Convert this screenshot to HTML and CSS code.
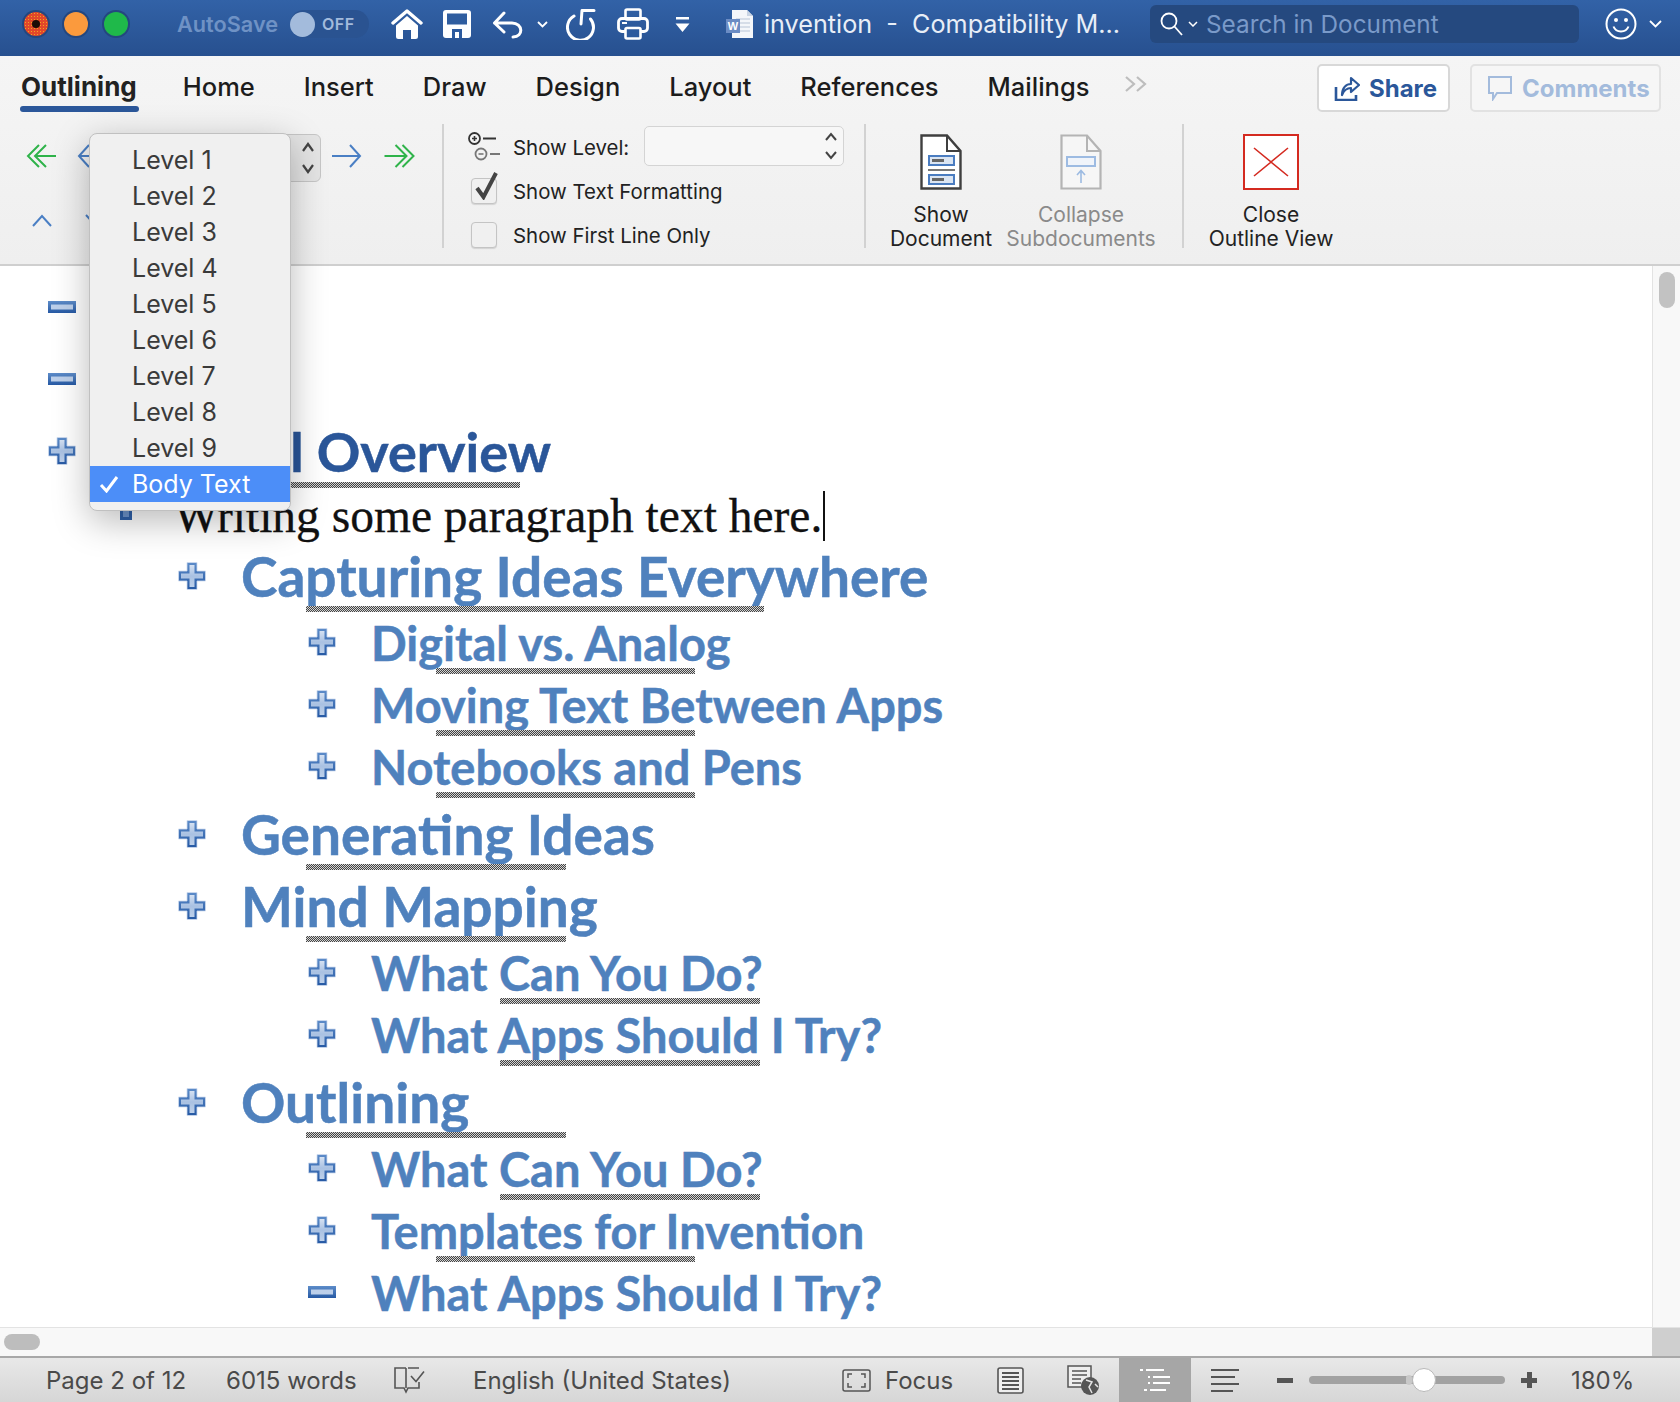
FILE: index.html
```html
<!DOCTYPE html>
<html lang="en">
<head>
<meta charset="utf-8">
<title>invention - Compatibility Mode</title>
<link rel="stylesheet" href="styles.css">
</head>
<body>
<svg class="defs" width="0" height="0" aria-hidden="true">
  <defs>
    <linearGradient id="pg" x1="0" y1="0" x2="0" y2="1">
      <stop offset="0" stop-color="#d5e1f2"/><stop offset="0.5" stop-color="#a9c1e2"/><stop offset="1" stop-color="#bdd0ea"/>
    </linearGradient>
    <linearGradient id="po" x1="0" y1="0" x2="0" y2="1">
      <stop offset="0" stop-color="#5d8cc9"/><stop offset="1" stop-color="#2659a4"/>
    </linearGradient>
    <symbol id="plus" viewBox="0 0 28 28">
      <path d="M9 0.500H19V9H27.500V19H19V27.500H9V19H0.500V9H9Z" fill="url(#po)" stroke="#cfdcef" stroke-width="0.800"/>
      <path d="M11.500 3H16.500V11.500H25V16.500H16.500V25H11.500V16.500H3V11.500H11.500Z" fill="url(#pg)"/>
    </symbol>
    <symbol id="minus" viewBox="0 0 28 12">
      <rect x="0" y="0" width="28" height="12" fill="url(#po)"/>
      <rect x="3" y="3.500" width="22" height="5" fill="#bccfea"/>
    </symbol>
    <symbol id="doc-show" viewBox="0 0 42 56">
      <path d="M1.500 1.500H27L40.500 17V54.500H1.500Z" fill="#fff" stroke="#3f3f3f" stroke-width="2.400"/>
      <path d="M27 1.500V17H40.500" fill="none" stroke="#3f3f3f" stroke-width="2"/>
      <rect x="9" y="22" width="25" height="9" fill="#dbe5f2" stroke="#4a7cc0" stroke-width="2"/>
      <rect x="12" y="25" width="12" height="3" fill="#666"/>
      <rect x="8" y="35" width="27" height="2" fill="#777"/>
      <rect x="9" y="41" width="25" height="9" fill="#dbe5f2" stroke="#4a7cc0" stroke-width="2"/>
      <rect x="12" y="44" width="12" height="3" fill="#666"/>
    </symbol>
    <symbol id="doc-collapse" viewBox="0 0 42 56">
      <path d="M1.500 1.500H27L40.500 17V54.500H1.500Z" fill="#f6f6f6" stroke="#b4b4b4" stroke-width="2.200"/>
      <path d="M27 1.500V17H40.500" fill="none" stroke="#b4b4b4" stroke-width="2"/>
      <rect x="7" y="23" width="28" height="9" fill="#f0f4fa" stroke="#9dbbe2" stroke-width="2"/>
      <path d="M21 49V37M17 41L21 36.500L25 41" fill="none" stroke="#9dbbe2" stroke-width="1.600"/>
    </symbol>
  </defs>
</svg>

<div class="page">
  <header class="titlebar">
    <span class="light light-red"><span class="light-dot"></span></span>
    <span class="light light-yellow"></span>
    <span class="light light-green"></span>
    <span class="autosave">AutoSave</span>
    <span class="toggle"><span class="knob"></span><span class="toggle-text">OFF</span></span>
    <svg class="qa qa-home" width="32" height="30" viewBox="0 0 32 30"><path d="M2 14L16 2L30 14" fill="none" stroke="#fff" stroke-width="3.400" stroke-linecap="round" stroke-linejoin="round"/><path d="M5 16.500L16 7L27 16.500V27.500A2.500 2.500 0 0 1 24.500 30H20V21H12V30H7.500A2.500 2.500 0 0 1 5 27.500Z" fill="#fff"/></svg>
    <svg class="qa qa-save" width="28" height="28" viewBox="0 0 28 28"><rect x="0" y="0" width="28" height="28" rx="3" fill="#fff"/><rect x="4" y="3.500" width="20" height="11" fill="#2f5d9f"/><rect x="9" y="19" width="10" height="9" fill="#2c5a9e"/><rect x="12" y="22" width="4" height="6" fill="#fff"/></svg>
    <svg class="qa qa-undo" width="32" height="30" viewBox="0 0 32 30"><path d="M12 4L2.500 14L12 23M2.500 14H20C31 14 32 28 21 28" fill="none" stroke="#fff" stroke-width="3" stroke-linecap="round" stroke-linejoin="round"/></svg>
    <svg class="qa qa-chev" width="11" height="7" viewBox="0 0 11 7"><path d="M1 1L5.500 5.500L10 1" fill="none" stroke="#fff" stroke-width="1.800"/></svg>
    <svg class="qa qa-redo" width="30" height="32" viewBox="0 0 30 32"><path d="M8 8A13 13 0 1 0 24.500 11M28 2.500H16L15 16" fill="none" stroke="#fff" stroke-width="3" stroke-linecap="round" stroke-linejoin="round"/></svg>
    <svg class="qa qa-print" width="32" height="32" viewBox="0 0 32 32"><rect x="8.500" y="1.500" width="15" height="10" rx="1.500" fill="none" stroke="#fff" stroke-width="2.600"/><rect x="1.500" y="10.500" width="29" height="13" rx="3.500" fill="none" stroke="#fff" stroke-width="2.800"/><path d="M5 15H10" stroke="#fff" stroke-width="2"/><rect x="8.500" y="20" width="15" height="10.500" rx="1.500" fill="#2c5a9e" stroke="#fff" stroke-width="2.600"/></svg>
    <svg class="qa qa-more" width="15" height="15" viewBox="0 0 15 15"><rect x="1" y="0" width="13" height="2.500" fill="#fff"/><path d="M0.500 6.500H14.500L7.500 15Z" fill="#fff"/></svg>
    <svg class="qa qa-word" width="28" height="28" viewBox="0 0 28 28"><path d="M6 0H21L27 6V28H6Z" fill="#f4f6fa"/><path d="M21 0V6H27" fill="#c9d4e4"/><path d="M10 9H24M10 13H24M10 17H24M10 21H24" stroke="#b8c4d6" stroke-width="1.200"/><rect x="0" y="9" width="14" height="14" fill="#6b8cc4"/><text class="word-w" x="7" y="20">W</text></svg>
    <span class="doc-title">invention&nbsp; - &nbsp;Compatibility M...</span>
    <div class="search">
      <svg class="search-icon" width="24" height="24" viewBox="0 0 24 24"><circle cx="9" cy="9" r="7.500" fill="none" stroke="#fff" stroke-width="1.800"/><path d="M14.500 14.500L22 23" stroke="#fff" stroke-width="1.800"/></svg>
      <svg class="search-chev" width="10" height="6" viewBox="0 0 10 6"><path d="M1 1L5 5L9 1" fill="none" stroke="#fff" stroke-width="1.500"/></svg>
      <span class="search-text">Search in Document</span>
    </div>
    <svg class="qa qa-smile" width="32" height="32" viewBox="0 0 32 32"><circle cx="16" cy="16" r="14.500" fill="none" stroke="#fff" stroke-width="2"/><circle cx="11" cy="12" r="2" fill="#fff"/><circle cx="21" cy="12" r="2" fill="#fff"/><path d="M8.500 18.500C11 25 21 25 23.500 18.500" fill="none" stroke="#fff" stroke-width="2"/></svg>
    <svg class="qa qa-chev2" width="13" height="8" viewBox="0 0 13 8"><path d="M1 1L6.500 6.500L12 1" fill="none" stroke="#fff" stroke-width="1.800"/></svg>
  </header>

  <section class="ribbon">
    <div class="tabrow">
      <nav class="tabs">
        <span class="tab tab-active">Outlining</span>
        <span class="tab">Home</span>
        <span class="tab">Insert</span>
        <span class="tab">Draw</span>
        <span class="tab">Design</span>
        <span class="tab">Layout</span>
        <span class="tab">References</span>
        <span class="tab">Mailings</span>
        <svg class="tab-more" width="24" height="16" viewBox="0 0 24 16"><path d="M2 1L10 8L2 15M13 1L21 8L13 15" fill="none" stroke="#bdbdbd" stroke-width="2.200"/></svg>
      </nav>
      <div class="tab-actions">
        <button class="btn btn-share">
          <svg width="26" height="26" viewBox="0 0 26 26"><path d="M2 12V25H22V20" fill="none" stroke="#2b579a" stroke-width="2.600"/><path d="M8 20C8 13 12 9 17 9V3L25 10L17 17V13C13 13 10 15 8 20Z" fill="#fff" stroke="#2b579a" stroke-width="2.200" stroke-linejoin="round"/></svg>
          Share
        </button>
        <button class="btn btn-comments">
          <svg width="26" height="26" viewBox="0 0 26 26"><path d="M2 2H24V18H10L6 24V18H2Z" fill="none" stroke="#a3bbdc" stroke-width="2"/></svg>
          Comments
        </button>
      </div>
    </div>
    <div class="tools">
      <div class="group group-nav">
        <div class="nav-row">
          <svg class="arr arr-first" width="32" height="26" viewBox="0 0 30 26"><path d="M13 2L2 13L13 24M20 2L9 13L20 24M9 13H30" fill="none" stroke="#2fb34a" stroke-width="2"/></svg>
          <svg class="arr arr-left" width="30" height="26" viewBox="0 0 30 26"><path d="M12 2L2 13L12 24M2 13H30" fill="none" stroke="#4a7fc4" stroke-width="2"/></svg>
          <div class="level-combo">
            <svg width="12" height="34" viewBox="0 0 12 34"><path d="M1 10L6 3L11 10M1 24L6 31L11 24" fill="none" stroke="#444" stroke-width="2.200"/></svg>
          </div>
          <svg class="arr arr-right" width="31" height="26" viewBox="0 0 31 26"><path d="M19 2L29 13L19 24M29 13H1" fill="none" stroke="#4a7fc4" stroke-width="2"/></svg>
          <svg class="arr arr-last" width="32" height="26" viewBox="0 0 31 26"><path d="M11 2L22 13L11 24M18 2L29 13L18 24M22 13H0" fill="none" stroke="#2fb34a" stroke-width="2"/></svg>
        </div>
        <div class="nav-row nav-row-low">
          <svg width="20" height="13" viewBox="0 0 20 13"><path d="M1 12L10 2L19 12" fill="none" stroke="#4a7fc4" stroke-width="2"/></svg>
          <svg class="arr-down" width="20" height="13" viewBox="0 0 20 13"><path d="M1 1L10 11L19 1" fill="none" stroke="#4a7fc4" stroke-width="2"/></svg>
        </div>
      </div>
      <div class="group group-show">
        <div class="show-row show-row-level">
          <svg class="pm" width="32" height="29" viewBox="0 0 32 29"><circle cx="6.500" cy="6.500" r="5.500" fill="none" stroke="#333" stroke-width="1.800"/><path d="M4 6.500H9M6.500 4V9" stroke="#333" stroke-width="1.600"/><path d="M15 6.500H28" stroke="#333" stroke-width="2"/><circle cx="13" cy="22" r="5.500" fill="none" stroke="#777" stroke-width="1.800"/><path d="M10.500 22H15.500" stroke="#777" stroke-width="1.600"/><path d="M22 22H32" stroke="#777" stroke-width="2"/></svg>
          <span class="show-label show-label-level">Show Level:</span>
          <div class="combo">
            <svg width="12" height="28" viewBox="0 0 12 28"><path d="M1 8L6 2L11 8M1 20L6 26L11 20" fill="none" stroke="#444" stroke-width="2"/></svg>
          </div>
        </div>
        <div class="show-row show-row-check">
          <span class="check"><svg class="check-mark" width="26" height="30" viewBox="0 0 26 30"><path d="M5 18L11.500 27L24 3" fill="none" stroke="#444" stroke-width="4"/></svg></span>
          <span class="show-label">Show Text Formatting</span>
        </div>
        <div class="show-row show-row-first">
          <span class="check"></span>
          <span class="show-label">Show First Line Only</span>
        </div>
      </div>
      <div class="group group-docs">
        <div class="big">
          <svg width="42" height="56"><use href="#doc-show"/></svg>
          <span class="big-label">Show<br>Document</span>
        </div>
        <div class="big big-off">
          <svg width="42" height="56"><use href="#doc-collapse"/></svg>
          <span class="big-label">Collapse<br>Subdocuments</span>
        </div>
      </div>
      <div class="group group-close">
        <div class="big">
          <svg width="56" height="56" viewBox="0 0 56 56"><rect x="1" y="1" width="54" height="54" fill="#fff" stroke="#d42a20" stroke-width="2"/><path d="M11 14L45 42M45 14L11 42" fill="none" stroke="#d42a20" stroke-width="1.600"/></svg>
          <span class="big-label">Close<br>Outline View</span>
        </div>
      </div>
    </div>
  </section>

  <main class="workspace">
    <div class="outline">
      <div class="row row-top"><svg class="ico-minus" width="28" height="12"><use href="#minus"/></svg></div>
      <div class="row row-top"><svg class="ico-minus" width="28" height="12"><use href="#minus"/></svg></div>
      <div class="row row-top row-title">
        <svg class="ico-plus" width="28" height="28"><use href="#plus"/></svg>
        <span class="head head-title">General Overview</span>
        <i class="squig squig-title"></i>
      </div>
      <div class="row row-body">
        <span class="body-mark"></span>
        <span class="body-text">Writing some paragraph text here.</span><span class="caret"></span>
      </div>
      <div class="row row-l1"><svg class="ico-plus" width="28" height="28"><use href="#plus"/></svg><span class="head head-1">Capturing Ideas Everywhere</span><i class="squig squig-1 squig-wide"></i></div>
      <div class="row row-l2"><svg class="ico-plus" width="28" height="28"><use href="#plus"/></svg><span class="head head-2">Digital vs. Analog</span><i class="squig squig-2"></i></div>
      <div class="row row-l2"><svg class="ico-plus" width="28" height="28"><use href="#plus"/></svg><span class="head head-2">Moving Text Between Apps</span><i class="squig squig-2"></i></div>
      <div class="row row-l2"><svg class="ico-plus" width="28" height="28"><use href="#plus"/></svg><span class="head head-2">Notebooks and Pens</span><i class="squig squig-2"></i></div>
      <div class="row row-l1"><svg class="ico-plus" width="28" height="28"><use href="#plus"/></svg><span class="head head-1">Generating Ideas</span><i class="squig squig-1"></i></div>
      <div class="row row-l1"><svg class="ico-plus" width="28" height="28"><use href="#plus"/></svg><span class="head head-1">Mind Mapping</span><i class="squig squig-1"></i></div>
      <div class="row row-l2"><svg class="ico-plus" width="28" height="28"><use href="#plus"/></svg><span class="head head-2">What Can You Do?</span><i class="squig squig-2 squig-q"></i></div>
      <div class="row row-l2"><svg class="ico-plus" width="28" height="28"><use href="#plus"/></svg><span class="head head-2">What Apps Should I Try?</span><i class="squig squig-2 squig-q"></i></div>
      <div class="row row-l1"><svg class="ico-plus" width="28" height="28"><use href="#plus"/></svg><span class="head head-1">Outlining</span><i class="squig squig-1"></i></div>
      <div class="row row-l2"><svg class="ico-plus" width="28" height="28"><use href="#plus"/></svg><span class="head head-2">What Can You Do?</span><i class="squig squig-2 squig-q"></i></div>
      <div class="row row-l2"><svg class="ico-plus" width="28" height="28"><use href="#plus"/></svg><span class="head head-2">Templates for Invention</span><i class="squig squig-2"></i></div>
      <div class="row row-l2"><svg class="ico-minus-l2" width="28" height="12"><use href="#minus"/></svg><span class="head head-2">What Apps Should I Try?</span></div>
    </div>
    <div class="vscroll"><span class="vthumb"></span></div>
    <ul class="menu">
      <li class="menu-item">Level 1</li>
      <li class="menu-item">Level 2</li>
      <li class="menu-item">Level 3</li>
      <li class="menu-item">Level 4</li>
      <li class="menu-item">Level 5</li>
      <li class="menu-item">Level 6</li>
      <li class="menu-item">Level 7</li>
      <li class="menu-item">Level 8</li>
      <li class="menu-item">Level 9</li>
      <li class="menu-item menu-item-on"><svg class="menu-check" width="20" height="18" viewBox="0 0 20 18"><path d="M2 10L7.500 16L18 2" fill="none" stroke="#fff" stroke-width="3"/></svg>Body Text</li>
    </ul>
  </main>

  <div class="hscroll"><span class="hthumb"></span><span class="corner"></span></div>

  <footer class="status">
    <span class="st st-page">Page 2 of 12</span>
    <span class="st st-words">6015 words</span>
    <svg class="st-book" width="31" height="27" viewBox="0 0 31 27"><path d="M12 1H1V21H10L12 25L14 21H25V15M14 1H25M12 1V21" fill="none" stroke="#555" stroke-width="1.600"/><path d="M17 9L22 14.500L30 4.500" fill="none" stroke="#555" stroke-width="1.600"/></svg>
    <span class="st st-lang">English (United States)</span>
    <svg class="st-focus" width="29" height="23" viewBox="0 0 29 23"><rect x="1" y="1" width="27" height="21" rx="2" fill="none" stroke="#555" stroke-width="1.500"/><path d="M6 9V5H10M19 5H23V9M23 14V18H19M10 18H6V14" fill="none" stroke="#555" stroke-width="1.500"/></svg>
    <span class="st st-focus-text">Focus</span>
    <svg class="st-print" width="27" height="27" viewBox="0 0 27 27"><rect x="1" y="1" width="25" height="25" rx="2" fill="#eee" stroke="#555" stroke-width="1.600"/><path d="M5 6H22M5 10H22M5 14H22M5 18H22M5 22H22" stroke="#555" stroke-width="1.800"/></svg>
    <svg class="st-web" width="32" height="30" viewBox="0 0 32 30"><path d="M1 1H24V22H1Z" fill="#eee" stroke="#555" stroke-width="1.500"/><path d="M5 6H20M5 10H20M5 14H14M5 18H14" stroke="#555" stroke-width="1.600"/><circle cx="23" cy="21" r="9" fill="#555"/><path d="M19 15L25 17L22 22L25 28M28 19L31 22" fill="none" stroke="#e4e4e4" stroke-width="1.500"/></svg>
    <span class="st-outline">
      <svg width="30" height="24" viewBox="0 0 30 24"><path d="M0 2H3M6 2H24M8 9H10M13 9H30M8 15H10M13 15H30M4 22H7M10 22H26" stroke="#fff" stroke-width="2"/></svg>
    </span>
    <svg class="st-draft" width="28" height="24" viewBox="0 0 28 24"><path d="M0 2H28M0 9H24M0 16H28M0 23H22" stroke="#555" stroke-width="2"/></svg>
    <span class="zoom-minus"></span>
    <span class="slider"><span class="slider-tick"></span><span class="slider-knob"></span></span>
    <span class="zoom-plus"></span>
    <span class="st st-pct">180%</span>
  </footer>
</div>
</body>
</html>
```

FILE: styles.css
```css
* { box-sizing: border-box; }
html, body { margin: 0; padding: 0; }
body { font-family: Inter, "Liberation Sans", sans-serif; background: #fff; color: #222; }
.defs { position: absolute; }
svg { display: block; flex: none; }
.page { width: 1680px; height: 1402px; display: flex; flex-direction: column; overflow: hidden; }

/* Title bar */
.titlebar { height: 56px; flex: none; display: flex; align-items: center; padding-bottom: 8px; background: linear-gradient(#3262a7, #27508f); color: #fff; }
.light { width: 24px; height: 24px; border-radius: 50%; flex: none; display: flex; align-items: center; justify-content: center; box-shadow: 0 0 0 2px #24477f; }
.light-red { margin-left: 24px; background: radial-gradient(circle, #f2a51e 0.8px, transparent 1px) 0 0 / 3px 3px, #e2472a; }
.light-dot { width: 8px; height: 8px; border-radius: 50%; background: #1c0c06; }
.light-yellow { margin-left: 16px; background: #fb9a3d; }
.light-green { margin-left: 16px; background: #1fb94a; }
.autosave { margin-left: 49px; width: 100px; font-size: 21.7px; font-weight: 600; color: #6f92c5; white-space: nowrap; }
.toggle { margin-left: 13px; width: 79px; height: 28px; border-radius: 14px; background: #2a5391; display: flex; align-items: center; }
.knob { width: 25px; height: 25px; border-radius: 50%; background: #a3bbdc; flex: none; }
.toggle-text { margin-left: 7px; font-size: 16px; font-weight: 600; color: #a3bbdc; letter-spacing: 0.5px; }
.qa-home { margin-left: 22px; }
.qa-save { margin-left: 20px; }
.qa-undo { margin-left: 21px; }
.qa-chev { margin-left: 13px; }
.qa-redo { margin-left: 18px; }
.qa-print { margin-left: 21px; }
.qa-more { margin-left: 26px; }
.qa-word { margin-left: 36px; }
.word-w { font-size: 11px; font-weight: 700; fill: #fff; text-anchor: middle; font-family: "Liberation Sans", sans-serif; }
.doc-title { margin-left: 10px; width: 367px; font-size: 25.2px; color: #e8eef7; white-space: nowrap; }
.search { margin-left: 19px; width: 429px; height: 38px; border-radius: 6px; background: #25497f; display: flex; align-items: center; flex: none; }
.search-icon { margin-left: 10px; }
.search-chev { margin-left: 4px; }
.search-text { margin-left: 8px; font-size: 24.3px; color: #7a9ac9; white-space: nowrap; }
.qa-smile { margin-left: 26px; }
.qa-chev2 { margin-left: 12px; }

/* Ribbon */
.ribbon { height: 210px; flex: none; background: linear-gradient(#f5f5f5, #efefef); border-bottom: 2px solid #cfcfcf; }
.tabrow { height: 56px; display: flex; justify-content: space-between; }
.tabs { display: flex; gap: 49px; padding-left: 21px; }
.tab { height: 56px; padding-top: 13px; font-size: 25.5px; font-weight: 500; line-height: 36px; color: #1c1c1c; position: relative; white-space: nowrap; }
.tab-active { font-weight: 700; font-size: 26px; color: #222; margin-right: -3px; }
.tab-active::after { content: ""; position: absolute; left: -1px; right: -2px; bottom: 0; height: 6px; border-radius: 3px; background: #2b579a; }
.tab-more { margin: 20px 0 0 -15px; }
.tab-actions { display: flex; gap: 20px; padding: 8px 19px 0 0; }
.btn { height: 48px; border-radius: 5px; border: 2px solid #d8d8d8; background: #fff; display: flex; align-items: center; gap: 9px; font: 700 24px Inter, "Liberation Sans", sans-serif; padding: 0 0 0 15px; }
.btn-share { width: 133px; color: #2b579a; }
.btn-comments { width: 191px; color: #a3bbdc; background: #f6f6f6; border-color: #e2e2e2; }
.tools { display: flex; align-items: flex-start; padding-top: 12px; }
.group { height: 124px; flex: none; border-right: 2px solid #d2d2d2; }
.group-nav { width: 444px; }
.nav-row { display: flex; align-items: center; height: 48px; margin-top: 10px; padding-left: 25px; }
.arr { margin-bottom: 4px; }
.arr-left { margin-left: 20px; }
.level-combo { width: 222px; height: 48px; margin-left: -8px; border: 1px solid #c6c6c6; border-radius: 6px; background: #e4e4e4; display: flex; align-items: center; justify-content: flex-end; padding-right: 6px; }
.arr-right { margin-left: 10px; }
.arr-last { margin-left: 22px; }
.nav-row-low { height: 13px; margin-top: 32px; padding-left: 32px; }
.arr-down { margin-left: 33px; }
.group-show { width: 422px; padding: 2px 0 0 24px; }
.show-row { display: flex; align-items: center; }
.show-row-level { height: 40px; }
.show-row-check { height: 26px; margin-top: 12px; padding-left: 3px; }
.show-row-first { height: 26px; margin-top: 18px; padding-left: 3px; }
.pm { margin-right: 13px; }
.show-label { font-size: 20.4px; color: #222; white-space: nowrap; }
.show-label-level { width: 118px; padding-top: 2px; }
.combo { width: 200px; height: 40px; margin-left: 13px; border: 1px solid #d4d4d4; border-radius: 5px; background: #f7f7f7; display: flex; align-items: center; justify-content: flex-end; padding-right: 6px; }
.check { width: 26px; height: 26px; margin-right: 16px; border: 1px solid #c4c4c4; border-radius: 4px; background: #f0f0f0; box-shadow: 0 1px 1px rgba(0,0,0,0.12); flex: none; position: relative; }
.check-mark { position: absolute; left: 0; top: -9px; }
.group-docs { width: 318px; display: flex; gap: 20px; padding: 10px 0 0 15px; }
.group-close { width: 200px; border-right: 0; padding: 10px 0 0 27px; }
.big { width: 120px; display: flex; flex-direction: column; align-items: center; }
.big-label { margin-top: 13px; font-size: 21px; line-height: 24px; text-align: center; white-space: nowrap; color: #222; }
.big-off .big-label { color: #8a8a8a; }

/* Outline */
.workspace { height: 1061px; flex: none; display: flex; position: relative; }
.outline { flex: 1; padding-top: 7px; background: #fff; overflow: hidden; }
.row { display: flex; align-items: center; position: relative; white-space: nowrap; }
.row-top { height: 72px; padding-left: 48px; }
.row-body { height: 53px; padding-left: 120px; }
.row-l1 { height: 72px; padding-left: 178px; }
.row-l2 { height: 62px; padding-left: 308px; }
.ico-plus { margin-bottom: 4px; }
.ico-minus { margin-bottom: 4px; }
.ico-minus-l2 { margin-bottom: 4px; }
.row-l1 .ico-plus, .row-l2 .ico-plus, .row-l1 .ico-minus, .row-l2 .ico-minus-l2 { margin-right: 35px; }
.row-l2 .ico-plus, .row-l2 .ico-minus-l2 { margin-bottom: 6px; }
.head { font-family: Lato, sans-serif; font-weight: 700; color: #4f81bd; -webkit-text-stroke: 0.5px currentColor; padding-bottom: 4px; }
.head-title { font-size: 54px; color: #2a5699; margin-left: 40px; }
.head-1 { font-size: 55px; }
.head-2 { font-size: 47px; }
.body-mark { width: 12px; height: 12px; background: #6f97cf; border: 3px solid #2f62ab; margin-bottom: 4px; }
.body-text { font-family: "Liberation Serif", serif; font-size: 47.5px; color: #111; margin-left: 46px; margin-left: 42px; -webkit-text-stroke: 0.3px currentColor; }
.caret { width: 2px; height: 50px; background: #111; margin-left: 1px; }
.squig { position: absolute; height: 6px; background: repeating-conic-gradient(#444 0 25%, #d4d4d4 0 50%) 0 0 / 2px 2px; }
.squig-title { left: 290px; width: 230px; top: 65px; }
.squig-1 { left: 306px; width: 260px; top: 64px; }
.squig-wide { width: 458px; }
.squig-2 { left: 436px; width: 259px; top: 54px; }
.squig-q { left: 500px; width: 260px; }
.vscroll { width: 28px; flex: none; background: #f8f8f8; border-left: 1px solid #e3e3e3; padding: 6px 0 0 6px; }
.vthumb { display: block; width: 16px; height: 36px; border-radius: 8px; background: #c2c2c2; }
.menu { position: absolute; left: 89px; top: -133px; width: 202px; margin: 0; padding: 8px 0; list-style: none; background: #f0f0f0; border: 1px solid #c0c0c0; border-radius: 8px; box-shadow: 0 10px 36px rgba(0,0,0,0.28); }
.menu-item { height: 36px; padding-left: 42px; font-size: 25px; line-height: 36px; color: #3a3a3a; display: flex; align-items: center; position: relative; }
.menu-item-on { background: #4c8ef8; color: #fff; }
.menu-check { position: absolute; left: 9px; top: 9px; }

/* Horizontal scroller */
.hscroll { height: 29px; flex: none; background: #f8f8f8; border-top: 1px solid #e3e3e3; display: flex; align-items: center; justify-content: space-between; padding-left: 4px; }
.hthumb { width: 36px; height: 16px; border-radius: 8px; background: #bdbdbd; }
.corner { width: 28px; height: 29px; background: #cfcfcf; }

/* Status bar */
.status { height: 46px; flex: none; display: flex; align-items: center; background: linear-gradient(#e8e8e8, #d6d6d6); border-top: 2px solid #a8a8a8; color: #444; }
.st { font-size: 24px; line-height: 30px; padding-top: 2px; white-space: nowrap; color: #4a4a4a; }
.st-page { margin-left: 46px; width: 139px; }
.st-words { margin-left: 41px; width: 129px; }
.st-book { margin-left: 39px; }
.st-lang { margin-left: 48px; width: 257px; }
.st-focus { margin-left: 112px; }
.st-focus-text { margin-left: 14px; width: 66px; font-size: 24px; line-height: 30px; padding-top: 2px; color: #4a4a4a; }
.st-print { margin-left: 46px; }
.st-web { margin-left: 43px; }
.st-outline { margin-left: 20px; width: 72px; height: 44px; background: #a6a6a6; display: flex; align-items: center; justify-content: center; }
.st-draft { margin-left: 20px; }
.zoom-minus { margin-left: 38px; width: 16px; height: 5px; background: #555; }
.slider { margin-left: 16px; width: 196px; height: 8px; border-radius: 4px; background: #a2a2a2; position: relative; }
.slider-tick { position: absolute; left: 97px; top: -1px; width: 6px; height: 10px; border-radius: 3px; background: #c8c8c8; }
.slider-knob { position: absolute; left: 103px; top: -8px; width: 24px; height: 24px; border-radius: 50%; background: #fff; border: 1px solid #b8b8b8; }
.zoom-plus { margin-left: 16px; width: 16px; height: 16px; background: linear-gradient(#555, #555) center / 16px 5px no-repeat, linear-gradient(#555, #555) center / 5px 16px no-repeat; }
.st-pct { margin-left: 34px; }
```
